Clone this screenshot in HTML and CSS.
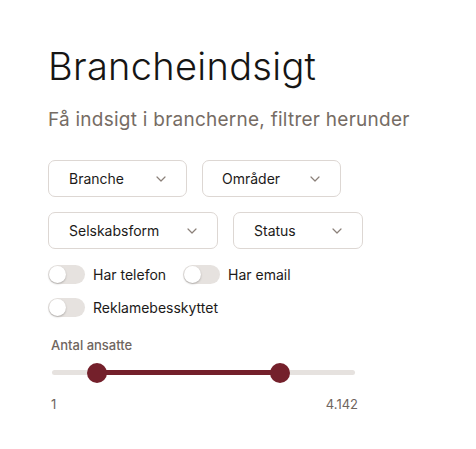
FILE: index.html
```html
<!DOCTYPE html>
<html lang="da">
<head>
<meta charset="utf-8">
<title>Brancheindsigt</title>
<link rel="stylesheet" href="styles.css">
</head>
<body>
<main class="page">
  <h1 class="title">Brancheindsigt</h1>
  <p class="subtitle">Få indsigt i brancherne, filtrer herunder</p>

  <div class="filters">
    <div class="filter-row">
      <button class="select select-branche">Branche<svg class="chev" viewBox="0 0 10 6"><path d="M1 1l4 4 4-4"/></svg></button>
      <button class="select select-omraader">Områder<svg class="chev" viewBox="0 0 10 6"><path d="M1 1l4 4 4-4"/></svg></button>
    </div>
    <div class="filter-row">
      <button class="select select-form">Selskabsform<svg class="chev" viewBox="0 0 10 6"><path d="M1 1l4 4 4-4"/></svg></button>
      <button class="select select-status">Status<svg class="chev" viewBox="0 0 10 6"><path d="M1 1l4 4 4-4"/></svg></button>
    </div>
  </div>

  <div class="toggles">
    <div class="toggle-row">
      <label class="toggle"><span class="switch"><span class="knob"></span></span>Har telefon</label>
      <label class="toggle"><span class="switch"><span class="knob"></span></span>Har email</label>
    </div>
    <div class="toggle-row">
      <label class="toggle"><span class="switch"><span class="knob"></span></span>Reklamebesskyttet</label>
    </div>
  </div>

  <section class="range">
    <div class="range-label">Antal ansatte</div>
    <div class="track">
      <div class="fill" style="left: 15%; width: 60.4%;"></div>
      <span class="thumb" style="left: 15%;"></span>
      <span class="thumb" style="left: 75.4%;"></span>
    </div>
    <div class="range-values"><span>1</span><span>4.142</span></div>
  </section>
</main>
</body>
</html>
```
FILE: styles.css
```css
* { box-sizing: border-box; }
html, body { margin: 0; padding: 0; background: #ffffff; }
body {
  font-family: Inter, "Noto Sans", sans-serif;
  color: #1c1a19;
}
.page {
  padding: 44px 48px 0 48px;
}
.title {
  margin: 0;
  font-size: 38px;
  font-weight: 300;
  line-height: 44px;
  letter-spacing: 0.3px;
  color: #161514;
}
.subtitle {
  margin: 20px 0 0 0;
  font-size: 19px;
  font-weight: 400;
  line-height: 24px;
  letter-spacing: 0.25px;
  color: #766c64;
}
.filters {
  margin-top: 28px;
  display: flex;
  flex-direction: column;
  gap: 15px;
}
.filter-row {
  display: flex;
  gap: 15px;
}
.select {
  display: flex;
  align-items: center;
  justify-content: space-between;
  height: 37px;
  padding: 0 20px;
  background: #fff;
  border: 1px solid #ddd7d3;
  border-radius: 7px;
  font-family: inherit;
  font-size: 14px;
  color: #1c1a19;
}
.select-branche { width: 139px; }
.select-omraader { width: 139px; padding-left: 19px; }
.select-form { width: 170px; }
.select-status { width: 130px; }
.chev {
  width: 10px;
  height: 6px;
  fill: none;
  stroke: #8b8079;
  stroke-width: 1.2;
  stroke-linecap: round;
  stroke-linejoin: round;
}
.toggles {
  margin-top: 16px;
  display: flex;
  flex-direction: column;
  gap: 14px;
}
.toggle-row {
  display: flex;
  gap: 17px;
}
.toggle {
  display: flex;
  align-items: center;
  gap: 8px;
  font-size: 14px;
  color: #1c1a19;
}
.switch {
  width: 37px;
  height: 19px;
  border-radius: 10px;
  background: #e6e2df;
  padding: 1px;
  display: flex;
  align-items: center;
}
.knob {
  width: 17px;
  height: 17px;
  border-radius: 50%;
  background: #fff;
  box-shadow: 0 1px 2px rgba(0,0,0,0.25);
}
.range {
  margin-top: 20px;
  width: 310px;
  padding-left: 3px;
}
.range-label {
  font-size: 13px;
  font-weight: 500;
  color: #6f655e;
  line-height: 16px;
}
.track {
  position: relative;
  margin: 17px 0 0 1px;
  width: 303px;
  height: 5px;
  border-radius: 3px;
  background: #e6e2df;
}
.fill {
  position: absolute;
  top: 0;
  height: 5px;
  background: #74202b;
}
.thumb {
  position: absolute;
  top: 50%;
  width: 20px;
  height: 20px;
  margin: -10px 0 0 -10px;
  border-radius: 50%;
  background: #74202b;
}
.range-values {
  margin-top: 21px;
  display: flex;
  justify-content: space-between;
  font-size: 13px;
  color: #6f655e;
  line-height: 16px;
}
```
